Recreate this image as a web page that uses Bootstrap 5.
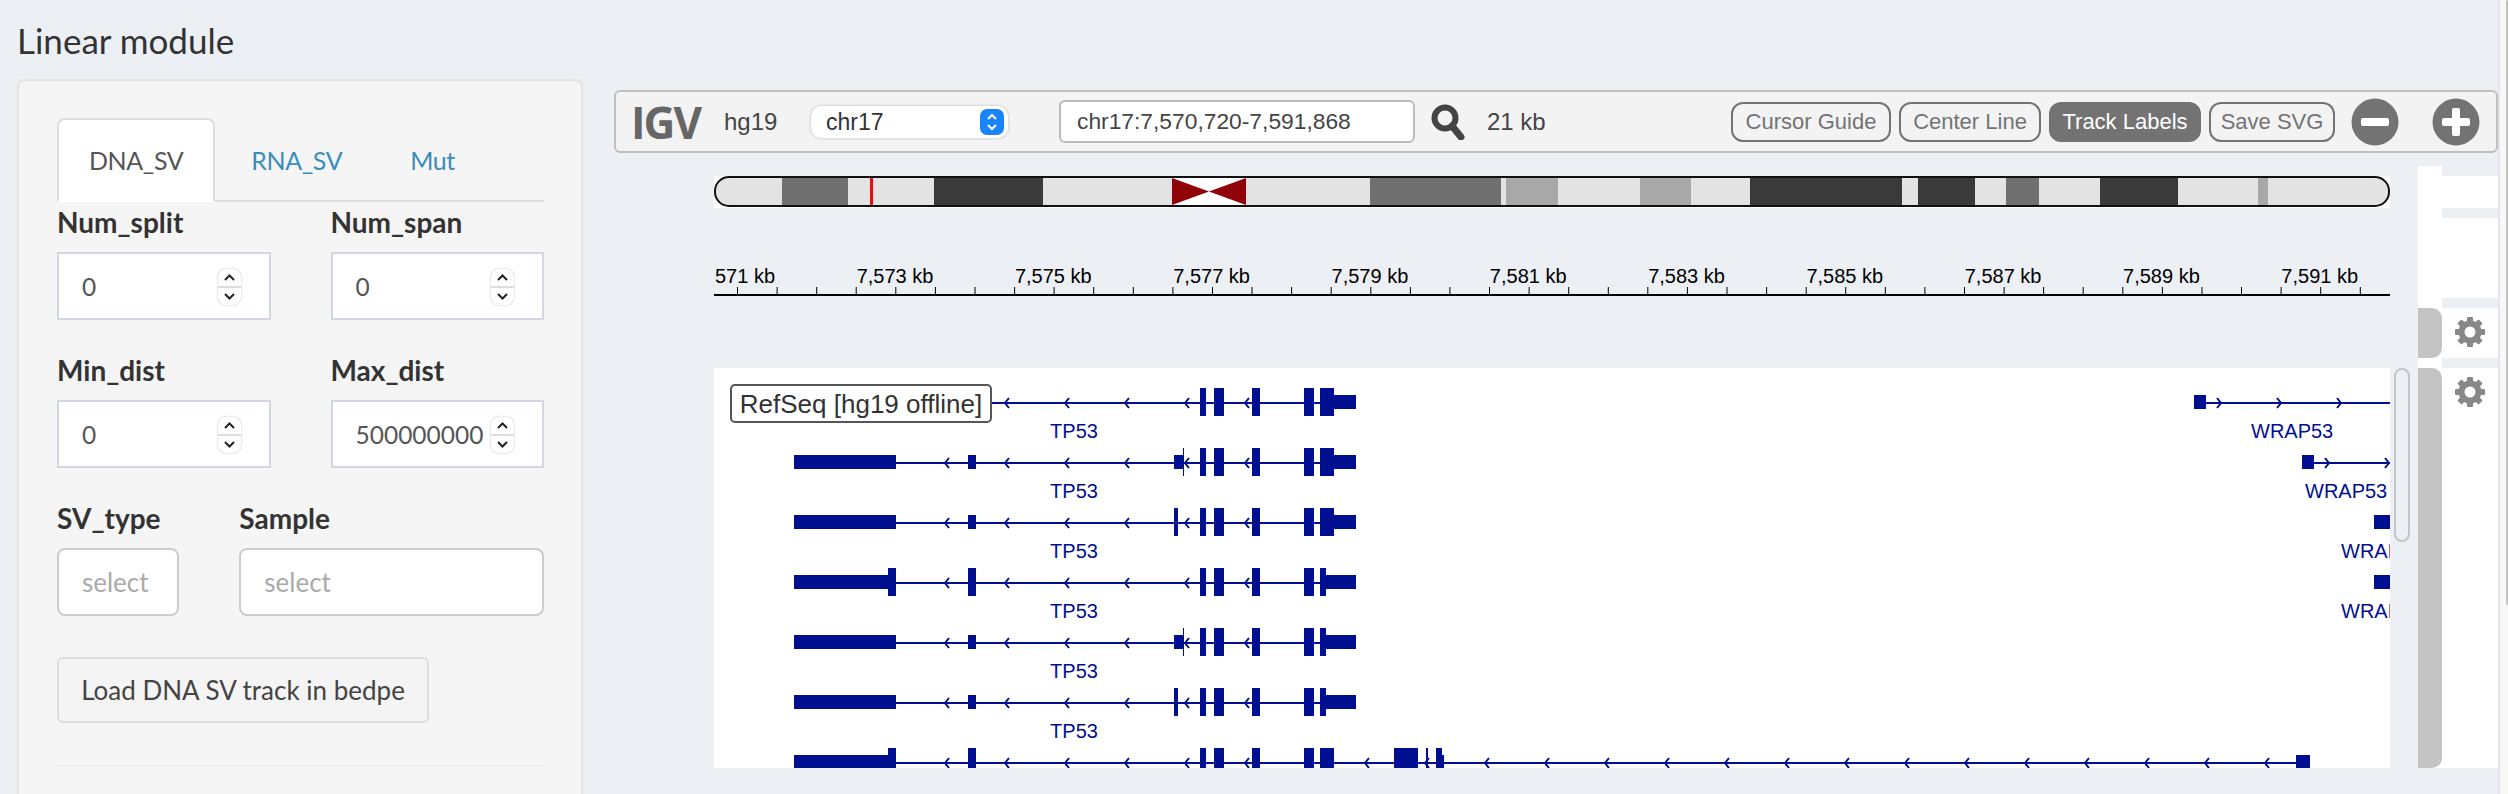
<!DOCTYPE html>
<html lang="en">
<head>
  <meta charset="UTF-8" />
  <title>Linear module</title>
  <link href="https://cdn.jsdelivr.net/npm/bootstrap@5.3.0/dist/css/bootstrap.min.css" rel="stylesheet">
  <style>
    html, body { height: 794px; overflow: hidden; }
    body { background: #eceff4; font-family: "Lato", sans-serif; color: #333; width: 2508px; position: relative; }
    .page-wrap { padding-left: 17px; }
    .left-col { width: 566px; flex: none; }
    .mod-title { font-size: 35px; line-height: 40px; margin: 20px 0 19px; font-weight: 400; font-family: "Lato", sans-serif; color: #333; }
    .side-panel { height: 715px; background: #f5f5f5; border: 2px solid #e3e3e3; border-bottom: 0; border-radius: 8px 8px 0 0; padding: 37px 37px 0 38px; }
    .side-panel .nav-tabs { border-bottom: 2px solid #ddd; height: 84px; font-size: 25px; letter-spacing: -.4px; }
    .side-panel .nav-link { height: 84px; padding: 0 30px; line-height: 80px; color: #3a8dbd; border: 2px solid transparent; border-radius: 8px 8px 0 0; margin-bottom: -2px; margin-right: 4px; }
    .side-panel .nav-link.active { color: #555; background: #fff; border-color: #ddd #ddd #fff; }
    .field-row { --bs-gutter-x: 60px; margin-top: 31px; }
    .field-row.first-row { margin-top: 1px; }
    .field-label { display: block; font-size: 28px; line-height: 38px; font-weight: 700; margin-bottom: 11px; color: #333; }
    .num-box { position: relative; }
    .num-input { width: 100%; height: 68px; border: 2px solid #d2d6e0; background: #fff; padding: 0 0 0 23px; font-size: 24.5px; color: #555; font-family: inherit; border-radius: 0; outline: 0; }
    .stepper { position: absolute; right: 30px; top: 17px; width: 23px; height: 36px; background: #fff; border-radius: 8px; box-shadow: 0 0 2px rgba(0,0,0,.3); }
    .select-box { height: 68px; border: 2px solid #ccc; border-radius: 8px; background: #fff; padding-left: 23px; font-size: 26px; line-height: 64px; color: #aaa; }
    .load-btn { margin-top: 41px; height: 66px; width: 372px; background: #f4f4f4; border: 2px solid #ddd; border-radius: 6px; font-size: 26px; color: #444; padding: 0; }
    .side-rule { margin: 42px 0 0; border: 0; border-top: 2px solid #eee; opacity: 1; }

    .right-col { width: 1884px; margin-left: 31px; padding-top: 90px; font-family: "Liberation Sans", sans-serif; }
    .igv-bar { height: 63px; background: #f3f3f3; border: 2px solid #bfbfbf; border-radius: 6px; color: #444; font-size: 24px; position: relative; }
    .igv-logo { font-family: "Open Sans", sans-serif; font-weight: 700; font-size: 44px; line-height: 1; color: #666; margin-left: 15px; letter-spacing: -2px; width: 93px; }
    .genome-name { width: 87px; }
    .chr-select { width: 197px; height: 32px; background: #fff; border-radius: 10px; box-shadow: 0 0 3px rgba(0,0,0,.25); padding-left: 15px; line-height: 32px; position: relative; color: #333; font-size: 23px; }
    .chr-step { position: absolute; right: 4px; top: 3px; width: 24px; height: 26px; background: #1a84ff; border-radius: 7px; }
    .chr-step svg { display: block; }
    .locus-box { width: 356px; height: 43px; background: #fff; border: 2px solid #bbb; border-radius: 6px; margin-left: 51px; padding-left: 16px; line-height: 39px; color: #444; font-size: 22.8px; }
    .bp-size { margin-left: 22px; }
    .igv-btn { height: 40px; border: 2px solid #737373; border-radius: 12px; background: transparent; color: #737373; font-size: 22px; padding: 0; font-family: inherit; }
    .igv-btn.on { background: #737373; color: #fff; }
    .igv-grid { display: grid; margin: 13px 0 0 100px; grid-template-columns: 1676px 28px 24px 56px; grid-template-rows: 0 32px 80px 50px 400px; row-gap: 10px; }
    .handle-strip { grid-column: 3; grid-row: 1 / -1; background: #fff; }
    .view-cell { grid-column: 1; overflow: hidden; }
    .view-cell svg { display: block; }
    .gutter-cell { grid-column: 2; position: relative; }
    .handle-cell { grid-column: 3; }
    .handle-cell.grab { background: #c4c4c4; border-radius: 0 10px 10px 0; }
    .gear-cell { grid-column: 4; background: #fff; }
    .gear-cell svg { display: block; margin: 9px 0 0 13px; }
    .scroll-thumb { position: absolute; left: 4px; top: 0; width: 16px; height: 174px; border: 2px solid #c4c4c4; border-radius: 8px; }
    .track-text { font-family: "Liberation Sans", sans-serif; }
    .page-scroll { position: absolute; left: 2498px; top: 0; width: 10px; height: 794px; background: #f8f8f8; border-left: 2px solid #e3e5ea; }
    .page-scroll-thumb { position: absolute; right: 0; top: 0; width: 2px; height: 605px; background: #c1c1c1; border-radius: 2px 0 0 2px; }
  </style>
</head>
<body>
  <div class="d-flex page-wrap">
    <div class="left-col">
      <h2 class="mod-title">Linear module</h2>
      <div class="side-panel">
        <ul class="nav nav-tabs">
          <li class="nav-item"><a class="nav-link active" href="#">DNA_SV</a></li>
          <li class="nav-item"><a class="nav-link" href="#">RNA_SV</a></li>
          <li class="nav-item"><a class="nav-link" href="#">Mut</a></li>
        </ul>

        <div class="row field-row first-row">
          <div class="col-6">
            <label class="field-label">Num_split</label>
            <div class="num-box"><input class="num-input" value="0"><span class="stepper" data-step></span></div>
          </div>
          <div class="col-6">
            <label class="field-label">Num_span</label>
            <div class="num-box"><input class="num-input" value="0"><span class="stepper" data-step></span></div>
          </div>
        </div>
        <div class="row field-row">
          <div class="col-6">
            <label class="field-label">Min_dist</label>
            <div class="num-box"><input class="num-input" value="0"><span class="stepper" data-step></span></div>
          </div>
          <div class="col-6">
            <label class="field-label">Max_dist</label>
            <div class="num-box"><input class="num-input" value="500000000"><span class="stepper" data-step></span></div>
          </div>
        </div>
        <div class="row field-row">
          <div class="col-4">
            <label class="field-label">SV_type</label>
            <div class="select-box">select</div>
          </div>
          <div class="col-8">
            <label class="field-label">Sample</label>
            <div class="select-box">select</div>
          </div>
        </div>
        <button class="btn load-btn">Load DNA SV track in bedpe</button>
        <hr class="side-rule">
      </div>
    </div>

    <div class="right-col">
      <div class="igv-bar d-flex align-items-center">
        <div class="igv-logo">IGV</div>
        <div class="genome-name">hg19</div>
        <div class="chr-select">chr17
          <span class="chr-step">
            <svg width="24" height="26" viewBox="0 0 24 26" fill="none" stroke="#fff" stroke-width="2"><path d="M8 10l4-4 4 4M8 16l4 4 4-4"/></svg>
          </span>
        </div>
        <div class="locus-box">chr17:7,570,720-7,591,868</div>
        <svg class="ms-3" width="34" height="36" viewBox="0 0 34 36" fill="none" stroke="#444"><circle cx="14" cy="14" r="10.5" stroke-width="6"/><path d="M21 22l9 11" stroke-width="7" stroke-linecap="round"/></svg>
        <div class="bp-size">21 kb</div>
        <div class="d-flex align-items-center ms-auto">
          <button class="igv-btn" style="width:160px">Cursor Guide</button>
          <button class="igv-btn ms-2" style="width:142px">Center Line</button>
          <button class="igv-btn on ms-2" style="width:152px">Track Labels</button>
          <button class="igv-btn ms-2" style="width:126px">Save SVG</button>
          <svg class="ms-3" width="48" height="48" viewBox="0 0 48 48"><circle cx="24" cy="24" r="23.5" fill="#737373"/><rect x="10" y="20" width="28" height="8" rx="2" fill="#fff"/></svg>
          <svg style="margin:0 16px 0 33px" width="48" height="48" viewBox="0 0 48 48"><circle cx="24" cy="24" r="23.5" fill="#737373"/><rect x="10" y="20" width="28" height="8" rx="2" fill="#fff"/><rect x="20" y="10" width="8" height="28" rx="2" fill="#fff"/></svg>
        </div>
      </div>

      <div class="igv-grid">
        <div class="handle-strip"></div>

        <div class="view-cell" style="grid-row:2"><svg id="ideogram" width="1676" height="32"></svg></div>
        <div class="gear-cell" style="grid-row:2"></div>

        <div class="view-cell" style="grid-row:3"><svg id="ruler" width="1676" height="80"></svg></div>
        <div class="gear-cell" style="grid-row:3"></div>

        <div class="handle-cell grab" style="grid-row:4"></div>
        <div class="gear-cell" style="grid-row:4"><svg width="30" height="30" viewBox="0 0 30 30" data-gear></svg></div>

        <div class="view-cell" style="grid-row:5;background:#fff"><svg id="genes" width="1676" height="400"></svg></div>
        <div class="gutter-cell" style="grid-row:5"><div class="scroll-thumb"></div></div>
        <div class="handle-cell grab" style="grid-row:5"></div>
        <div class="gear-cell" style="grid-row:5"><svg width="30" height="30" viewBox="0 0 30 30" data-gear></svg></div>
      </div>
    </div>
  </div>
  <div class="page-scroll"><div class="page-scroll-thumb"></div></div>

  <script>
    // number input steppers
    document.querySelectorAll("[data-step]").forEach(el => {
      el.innerHTML = '<svg width="23" height="36" viewBox="0 0 23 36" fill="none" stroke="#222" stroke-width="2"><path d="M7 11l4.5-4.5L16 11M7 25l4.5 4.5L16 25"/><path d="M0 18h23" stroke="#ddd"/></svg>';
    });

    // gear icon
    let gearPath = "";
    for (let i = 0; i < 8; i++) {
      gearPath += `<rect x="12" y="0" width="6" height="7" rx="1" transform="rotate(${i * 45} 15 15)"/>`;
    }
    document.querySelectorAll("[data-gear]").forEach(el => {
      el.innerHTML = `<g fill="#888">${gearPath}</g><circle cx="15" cy="15" r="8.5" fill="none" stroke="#888" stroke-width="6"/>`;
    });

    // ideogram, band values are page x, drawn relative to the viewport start (714)
    const bands = [
      [714,782,"#e3e3e3"],[782,848,"#707070"],[848,934,"#e3e3e3"],[934,1043,"#3a3a3a"],[1043,1172,"#e3e3e3"],
      [1246,1370,"#e3e3e3"],[1370,1501,"#707070"],[1501,1506,"#e3e3e3"],[1506,1558,"#a9a9a9"],[1558,1640,"#e3e3e3"],[1640,1691,"#a9a9a9"],
      [1691,1750,"#e3e3e3"],[1750,1902,"#3a3a3a"],[1902,1918,"#e3e3e3"],[1918,1975,"#3a3a3a"],[1975,2006,"#e3e3e3"],
      [2006,2039,"#707070"],[2039,2100,"#e3e3e3"],[2100,2178,"#3a3a3a"],[2178,2258,"#e3e3e3"],[2258,2268,"#a9a9a9"],[2268,2390,"#e3e3e3"]
    ];
    let ideo = '<defs><clipPath id="chromClip"><rect x="1" y="1" width="1674" height="29" rx="14"/></clipPath></defs><rect width="1676" height="32" fill="#fff"/><g clip-path="url(#chromClip)">';
    bands.forEach(b => { ideo += `<rect x="${b[0]-714}" y="0" width="${b[1]-b[0]}" height="32" fill="${b[2]}"/>`; });
    ideo += '</g>';
    ideo += '<path d="M458 2L495 15.5L458 29ZM532 2L495 15.5L532 29Z" fill="#8f0207"/>';
    ideo += '<rect x="156" y="2" width="3" height="28" fill="#f01"/>';
    ideo += '<rect x="1" y="1" width="1674" height="29" rx="14" fill="none" stroke="#111" stroke-width="2"/>';
    document.getElementById("ideogram").innerHTML = ideo;

    // ruler
    let ruler = '<rect x="0" y="76" width="1676" height="2" fill="#000"/>';
    for (let x = 23; x < 1676; x += 39.58) {
      ruler += `<rect x="${x.toFixed(1)}" y="69" width="1" height="8" fill="#000"/>`;
    }
    const ticks = ["571 kb", "7,573 kb", "7,575 kb", "7,577 kb", "7,579 kb", "7,581 kb", "7,583 kb", "7,585 kb", "7,587 kb", "7,589 kb", "7,591 kb"];
    ticks.forEach((t, i) => {
      const cx = i === 0 ? 31 : 181 + (i - 1) * 158.3;
      ruler += `<text class="track-text" x="${cx}" y="65" text-anchor="middle" font-size="20" fill="#000">${t}</text>`;
    });
    document.getElementById("ruler").innerHTML = ruler;

    // gene track, coords in page x and y, shifted to the track origin
    const blue = "#000f8f";
    const X = 714, Y = 368;
    let g = "";
    function rect(x1, x2, cy, tall) {
      const top = cy - (tall ? 15 : 8), h = tall ? 28 : 14;
      g += `<rect x="${x1 - X}" y="${top - Y}" width="${x2 - x1}" height="${h}" fill="${blue}"/>`;
    }
    function line(x1, x2, cy) {
      g += `<rect x="${x1 - X}" y="${cy - 1 - Y}" width="${x2 - x1}" height="2" fill="${blue}"/>`;
    }
    function arrow(x, cy, dir) {
      const d = dir * 4;
      g += `<path d="M${x - X + d} ${cy - Y - 5}L${x - X} ${cy - Y}L${x - X + d} ${cy - Y + 5}" fill="none" stroke="${blue}" stroke-width="2"/>`;
    }
    function label(t, x, cy, anchor) {
      g += `<text class="track-text" x="${x - X}" y="${cy - Y + 7}" text-anchor="${anchor}" font-size="20" fill="${blue}">${t}</text>`;
    }
    const common = [[1200,1206],[1214,1224],[1252,1260],[1304,1314]];
    // left = left utr end style, smallTall = small exon height, mid = 0 none / 1 stub / 2 bar, last = end of tall exon
    const rows = [
      { y: 403, left: false, mid: 0, last: 1334 },
      { y: 463, left: "short", smallTall: false, mid: 1, last: 1334 },
      { y: 523, left: "short", smallTall: false, mid: 2, last: 1334 },
      { y: 583, left: "tall", smallTall: true, mid: 0, last: 1326 },
      { y: 643, left: "short", smallTall: false, mid: 1, last: 1326 },
      { y: 703, left: "short", smallTall: false, mid: 2, last: 1326 }
    ];
    rows.forEach(r => {
      line(r.left ? 896 : 992, 1320, r.y);
      if (r.left) {
        rect(794, r.left === "tall" ? 888 : 896, r.y, false);
        if (r.left === "tall") rect(888, 896, r.y, true);
        rect(968, 976, r.y, r.smallTall);
      }
      for (let x = r.left ? 945 : 1005; x <= 1305; x += 60) arrow(x, r.y, 1);
      if (r.mid === 1) { rect(1174, 1183, r.y, false); rect(1183, 1184, r.y, true); }
      if (r.mid === 2) rect(1174, 1178, r.y, true);
      common.forEach(c => rect(c[0], c[1], r.y, true));
      rect(1320, r.last, r.y, true);
      rect(r.last, 1356, r.y, false);
      label("TP53", 1074, r.y + 28, "middle");
    });
    // last row runs past the viewport bottom
    line(896, 2296, 763);
    rect(794, 888, 763, false); rect(888, 896, 763, true); rect(968, 976, 763, true);
    common.forEach(c => rect(c[0], c[1], 763, true));
    rect(1320, 1334, 763, true);
    for (let x = 945; x <= 2265; x += 60) arrow(x, 763, 1);
    rect(1394, 1418, 763, true); rect(1426, 1428, 763, true); rect(1436, 1442, 763, true); rect(1442, 1444, 763, false);
    rect(2296, 2310, 763, false);

    // WRAP53
    rect(2194, 2206, 403, false); line(2206, 2390, 403);
    [2221, 2281, 2341].forEach(x => arrow(x, 403, -1));
    label("WRAP53", 2251, 431, "start");
    rect(2302, 2314, 463, false); line(2314, 2390, 463);
    [2329, 2389].forEach(x => arrow(x, 463, -1));
    label("WRAP53", 2305, 491, "start");
    rect(2374, 2390, 523, false); label("WRAP53", 2341, 551, "start");
    rect(2374, 2390, 583, false); label("WRAP53", 2341, 611, "start");

    // track name over the genes
    g += `<rect x="17" y="17" width="260" height="37" rx="4" fill="#fff" stroke="#555" stroke-width="2"/>`;
    g += `<text class="track-text" x="147" y="45" text-anchor="middle" font-size="26" fill="#333">RefSeq [hg19 offline]</text>`;
    document.getElementById("genes").innerHTML = g;
  </script>
  <script src="https://cdn.jsdelivr.net/npm/bootstrap@5.3.0/dist/js/bootstrap.bundle.min.js"></script>
</body>
</html>
